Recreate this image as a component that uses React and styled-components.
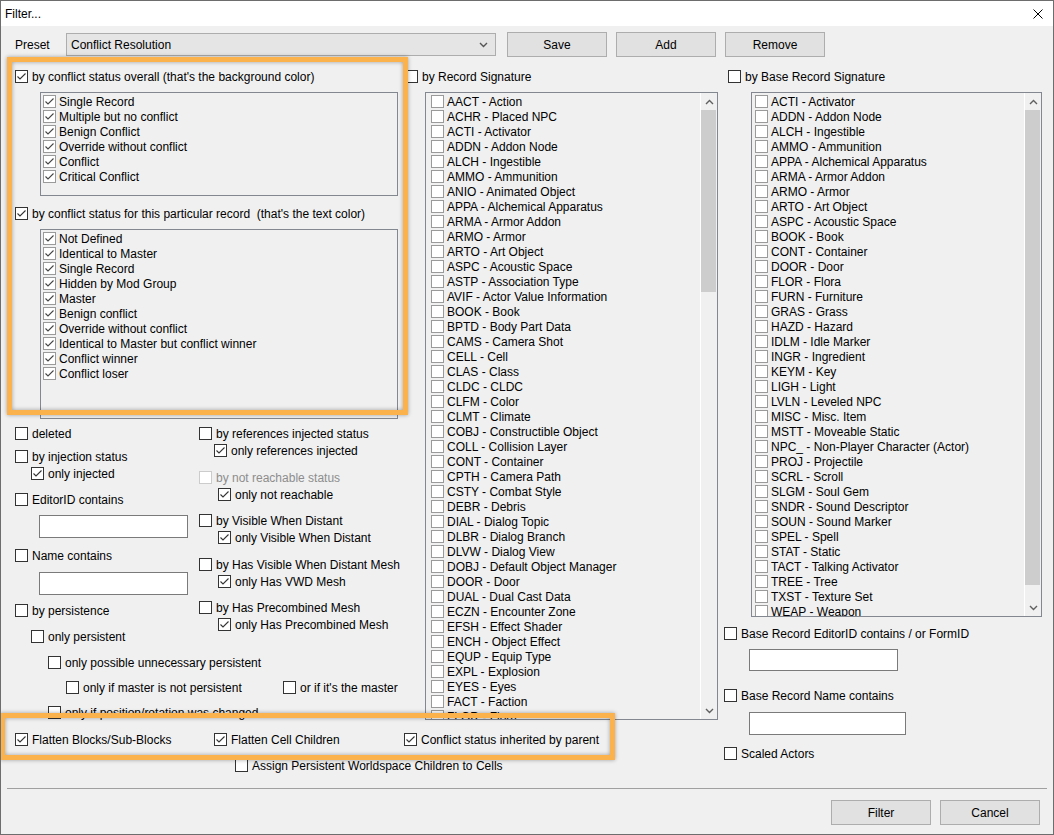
import React from "react";
import styled, { createGlobalStyle } from "styled-components";

const GlobalStyle = createGlobalStyle`
  html, body {
    margin: 0;
    padding: 0;
    background: #f0f0f0;
  }
  body {
    font-family: "Liberation Sans", Arial, sans-serif;
    font-size: 12px;
    color: #000;
  }
  * {
    box-sizing: border-box;
  }
`;

const Window = styled.div`
  position: relative;
  width: 1054px;
  height: 835px;
  border: 1px solid #6d6d6d;
  background: #f0f0f0;
  overflow: hidden;
  display: flex;
  flex-direction: column;
`;

const TitleBar = styled.div`
  height: 25px;
  flex: none;
  background: #fff;
  display: flex;
  align-items: center;
  justify-content: space-between;
  padding: 0 10px 0 4px;
`;

const Body = styled.div`
  flex: 1;
  display: flex;
  flex-direction: column;
  padding: 0 6px;
`;

const PresetRow = styled.div`
  margin-top: 6px;
  height: 25px;
  padding-left: 8px;
  display: flex;
  align-items: center;
`;

const PresetLabel = styled.span`
  width: 51px;
`;

const Combo = styled.div`
  width: 430px;
  height: 23px;
  border: 1px solid #adadad;
  background: #e5e5e5;
  display: flex;
  align-items: center;
  justify-content: space-between;
  padding: 0 7px 0 4px;
  margin-right: 11px;
`;

const ButtonGroup = styled.div`
  display: flex;
  gap: 9px;
  padding-right: ${(p) => p.$pr || 0}px;
  justify-content: ${(p) => (p.$end ? "flex-end" : "flex-start")};
  margin-top: ${(p) => p.$mt || 0}px;
`;

const Button = styled.button`
  width: 100px;
  height: 25px;
  border: 1px solid #adadad;
  background: #e1e1e1;
  font-family: inherit;
  font-size: 12px;
  color: #000;
  padding: 0;
`;

const Main = styled.div`
  display: flex;
  margin-top: 11px;
  padding-left: 8px;
`;

const LeftBlock = styled.div`
  width: 709px;
  flex: none;
  display: flex;
  flex-direction: column;
`;

const UpperRow = styled.div`
  display: flex;
`;

const Column = styled.div`
  width: ${(p) => (p.$w ? `${p.$w}px` : "auto")};
  flex: ${(p) => (p.$w ? "none" : "1")};
  display: flex;
  flex-direction: column;
  align-items: flex-start;
`;

const SubColumns = styled.div`
  display: flex;
  margin-top: 6px;
`;

const CheckRow = styled.div`
  display: flex;
  align-items: center;
  gap: 4px;
  height: 17px;
  margin-top: ${(p) => p.$mt || 0}px;
  margin-left: ${(p) => p.$ml || 0}px;
  color: ${(p) => (p.$disabled ? "#8d8d8d" : "#000")};
  white-space: pre;
`;

const Box = styled.span`
  flex: none;
  width: 13px;
  height: 13px;
  border: 1px solid
    ${(p) => (p.$disabled ? "#cccccc" : p.$soft ? "#9a9a9a" : "#333333")};
  background: #fff;
  display: flex;
  align-items: center;
  justify-content: center;
`;

const PairRow = styled.div`
  display: grid;
  grid-template-columns: ${(p) => p.$cols};
  margin-top: ${(p) => p.$mt || 0}px;
  margin-left: ${(p) => p.$ml || 0}px;
  white-space: nowrap;
`;

const TextBox = styled.div`
  width: ${(p) => p.$w}px;
  height: ${(p) => p.$h}px;
  margin-top: ${(p) => p.$mt}px;
  margin-left: ${(p) => p.$ml}px;
  border: 1px solid #7a7a7a;
  background: #fff;
`;

const ListBox = styled.div`
  display: flex;
  width: ${(p) => p.$w}px;
  height: ${(p) => p.$h}px;
  margin-top: 7px;
  margin-left: ${(p) => p.$ml}px;
  border: 1px solid #828790;
  background: #f0f0f0;
  overflow: hidden;
`;

const ListItems = styled.div`
  flex: 1;
  padding: 1px 0 0 ${(p) => p.$pad}px;
`;

const ListItem = styled.div`
  height: 15px;
  display: flex;
  align-items: center;
  gap: 3px;
  white-space: nowrap;
`;

const ScrollBar = styled.div`
  width: 17px;
  flex: none;
  border-left: 1px solid #fff;
  background: #f0f0f0;
  display: flex;
  flex-direction: column;
`;

const Arrow = styled.div`
  height: 17px;
  flex: none;
  display: flex;
  align-items: center;
  justify-content: center;
`;

const Track = styled.div`
  flex: 1;
`;

const Thumb = styled.div`
  height: ${(p) => p.$h}px;
  margin-right: 1px;
  background: #cdcdcd;
`;

const Separator = styled.div`
  height: 1px;
  margin-top: 14px;
  background: #a0a0a0;
`;

const Highlight = styled.div`
  position: absolute;
  left: ${(p) => p.$x}px;
  top: ${(p) => p.$y}px;
  width: ${(p) => p.$w}px;
  height: ${(p) => p.$h}px;
  border: 5px solid #fbb14c;
  box-shadow: 0 0 4px rgba(0, 0, 0, 0.35), inset 0 0 4px rgba(0, 0, 0, 0.35);
  pointer-events: none;
`;

const CheckMark = ({ color = "#333" }) => (
  <svg width="11" height="11" viewBox="0 0 11 11">
    <polyline points="1.5,5.5 4,8 9.5,2.5" fill="none" stroke={color} strokeWidth="1.1" />
  </svg>
);

const Check = ({ checked, disabled, soft, mt, ml, children }) => (
  <CheckRow $mt={mt} $ml={ml} $disabled={disabled}>
    <Box $soft={soft} $disabled={disabled}>{checked && <CheckMark />}</Box>
    {children}
  </CheckRow>
);

const Chevron = ({ up, color = "#606060" }) => (
  <svg width="9" height="6" viewBox="0 0 9 6">
    <polyline
      points={up ? "1,5 4.5,1.5 8,5" : "1,1 4.5,4.5 8,1"}
      fill="none"
      stroke={color}
      strokeWidth="1.4"
    />
  </svg>
);

const CheckList = ({ items, checked, w, h, ml, pad, thumb }) => (
  <ListBox $w={w} $h={h} $ml={ml}>
    <ListItems $pad={pad}>
      {items.map((item) => (
        <ListItem key={item}>
          <Box $soft>{checked && <CheckMark color="#444" />}</Box>
          {item}
        </ListItem>
      ))}
    </ListItems>
    {thumb && (
      <ScrollBar>
        <Arrow>
          <Chevron up />
        </Arrow>
        <Track>
          <Thumb $h={thumb} />
        </Track>
        <Arrow>
          <Chevron />
        </Arrow>
      </ScrollBar>
    )}
  </ListBox>
);

const overallStatus = [
  "Single Record",
  "Multiple but no conflict",
  "Benign Conflict",
  "Override without conflict",
  "Conflict",
  "Critical Conflict",
];

const recordStatus = [
  "Not Defined",
  "Identical to Master",
  "Single Record",
  "Hidden by Mod Group",
  "Master",
  "Benign conflict",
  "Override without conflict",
  "Identical to Master but conflict winner",
  "Conflict winner",
  "Conflict loser",
];

const recordSignatures = [
  "AACT - Action",
  "ACHR - Placed NPC",
  "ACTI - Activator",
  "ADDN - Addon Node",
  "ALCH - Ingestible",
  "AMMO - Ammunition",
  "ANIO - Animated Object",
  "APPA - Alchemical Apparatus",
  "ARMA - Armor Addon",
  "ARMO - Armor",
  "ARTO - Art Object",
  "ASPC - Acoustic Space",
  "ASTP - Association Type",
  "AVIF - Actor Value Information",
  "BOOK - Book",
  "BPTD - Body Part Data",
  "CAMS - Camera Shot",
  "CELL - Cell",
  "CLAS - Class",
  "CLDC - CLDC",
  "CLFM - Color",
  "CLMT - Climate",
  "COBJ - Constructible Object",
  "COLL - Collision Layer",
  "CONT - Container",
  "CPTH - Camera Path",
  "CSTY - Combat Style",
  "DEBR - Debris",
  "DIAL - Dialog Topic",
  "DLBR - Dialog Branch",
  "DLVW - Dialog View",
  "DOBJ - Default Object Manager",
  "DOOR - Door",
  "DUAL - Dual Cast Data",
  "ECZN - Encounter Zone",
  "EFSH - Effect Shader",
  "ENCH - Object Effect",
  "EQUP - Equip Type",
  "EXPL - Explosion",
  "EYES - Eyes",
  "FACT - Faction",
  "FLOR - Flora",
];

const baseSignatures = [
  "ACTI - Activator",
  "ADDN - Addon Node",
  "ALCH - Ingestible",
  "AMMO - Ammunition",
  "APPA - Alchemical Apparatus",
  "ARMA - Armor Addon",
  "ARMO - Armor",
  "ARTO - Art Object",
  "ASPC - Acoustic Space",
  "BOOK - Book",
  "CONT - Container",
  "DOOR - Door",
  "FLOR - Flora",
  "FURN - Furniture",
  "GRAS - Grass",
  "HAZD - Hazard",
  "IDLM - Idle Marker",
  "INGR - Ingredient",
  "KEYM - Key",
  "LIGH - Light",
  "LVLN - Leveled NPC",
  "MISC - Misc. Item",
  "MSTT - Moveable Static",
  "NPC_ - Non-Player Character (Actor)",
  "PROJ - Projectile",
  "SCRL - Scroll",
  "SLGM - Soul Gem",
  "SNDR - Sound Descriptor",
  "SOUN - Sound Marker",
  "SPEL - Spell",
  "STAT - Static",
  "TACT - Talking Activator",
  "TREE - Tree",
  "TXST - Texture Set",
  "WEAP - Weapon",
];

export default function App() {
  return (
    <>
      <GlobalStyle />
      <Window>
        <TitleBar>
          <span>Filter...</span>
          <svg width="10" height="10" viewBox="0 0 10 10">
            <path d="M0.5 0.5 L9.5 9.5 M9.5 0.5 L0.5 9.5" stroke="#000" strokeWidth="1" />
          </svg>
        </TitleBar>
        <Body>
          <PresetRow>
            <PresetLabel>Preset</PresetLabel>
            <Combo>
              <span>Conflict Resolution</span>
              <Chevron color="#555" />
            </Combo>
            <ButtonGroup>
              <Button>Save</Button>
              <Button>Add</Button>
              <Button>Remove</Button>
            </ButtonGroup>
          </PresetRow>

          <Main>
            <LeftBlock>
              <UpperRow>
                <Column $w={390}>
                  <Check checked>by conflict status overall (that's the background color)</Check>
                  <CheckList items={overallStatus} checked w={358} h={104} ml={25} pad={2} />
                  <Check checked mt={9}>
                    by conflict status for this particular record  (that's the text color)
                  </Check>
                  <CheckList items={recordStatus} checked w={358} h={190} ml={25} pad={2} />
                  <SubColumns>
                    <Column $w={184}>
                      <Check>deleted</Check>
                      <Check mt={6}>by injection status</Check>
                      <Check checked ml={16}>only injected</Check>
                      <Check mt={9}>EditorID contains</Check>
                      <TextBox $w={149} $h={23} $mt={7} $ml={24} />
                      <Check mt={9}>Name contains</Check>
                      <TextBox $w={149} $h={23} $mt={8} $ml={24} />
                      <Check mt={7}>by persistence</Check>
                      <Check mt={9} ml={16}>only persistent</Check>
                      <Check mt={9} ml={33}>only possible unnecessary persistent</Check>
                      <PairRow $cols="217px auto" $mt={8} $ml={51}>
                        <Check>only if master is not persistent</Check>
                        <Check>or if it's the master</Check>
                      </PairRow>
                      <Check mt={8} ml={33}>only if position/rotation was changed</Check>
                    </Column>
                    <Column>
                      <Check>by references injected status</Check>
                      <Check checked ml={15}>only references injected</Check>
                      <Check disabled mt={10}>by not reachable status</Check>
                      <Check checked ml={19}>only not reachable</Check>
                      <Check mt={9}>by Visible When Distant</Check>
                      <Check checked ml={19}>only Visible When Distant</Check>
                      <Check mt={10}>by Has Visible When Distant Mesh</Check>
                      <Check checked ml={19}>only Has VWD Mesh</Check>
                      <Check mt={9}>by Has Precombined Mesh</Check>
                      <Check checked ml={19}>only Has Precombined Mesh</Check>
                    </Column>
                  </SubColumns>
                </Column>
                <Column $w={319}>
                  <Check>by Record Signature</Check>
                  <CheckList items={recordSignatures} w={293} h={628} ml={20} pad={5} thumb={182} />
                </Column>
              </UpperRow>
              <PairRow $cols="199px 190px auto" $mt={10}>
                <Check checked>Flatten Blocks/Sub-Blocks</Check>
                <Check checked>Flatten Cell Children</Check>
                <Check checked>Conflict status inherited by parent</Check>
              </PairRow>
              <Check mt={9} ml={220}>Assign Persistent Worldspace Children to Cells</Check>
            </LeftBlock>

            <Column>
              <Check ml={4}>by Base Record Signature</Check>
              <CheckList items={baseSignatures} w={291} h={525} ml={27} pad={3} thumb={475} />
              <Check mt={8}>Base Record EditorID contains / or FormID</Check>
              <TextBox $w={149} $h={22} $mt={7} $ml={25} />
              <Check mt={16}>Base Record Name contains</Check>
              <TextBox $w={157} $h={23} $mt={8} $ml={25} />
              <Check mt={10}>Scaled Actors</Check>
            </Column>
          </Main>

          <Separator />
          <ButtonGroup $end $pr={7} $mt={11}>
            <Button>Filter</Button>
            <Button>Cancel</Button>
          </ButtonGroup>
        </Body>

        <Highlight $x={6} $y={56} $w={401} $h={358} />
        <Highlight $x={-1} $y={712} $w={615} $h={47} />
      </Window>
    </>
  );
}
